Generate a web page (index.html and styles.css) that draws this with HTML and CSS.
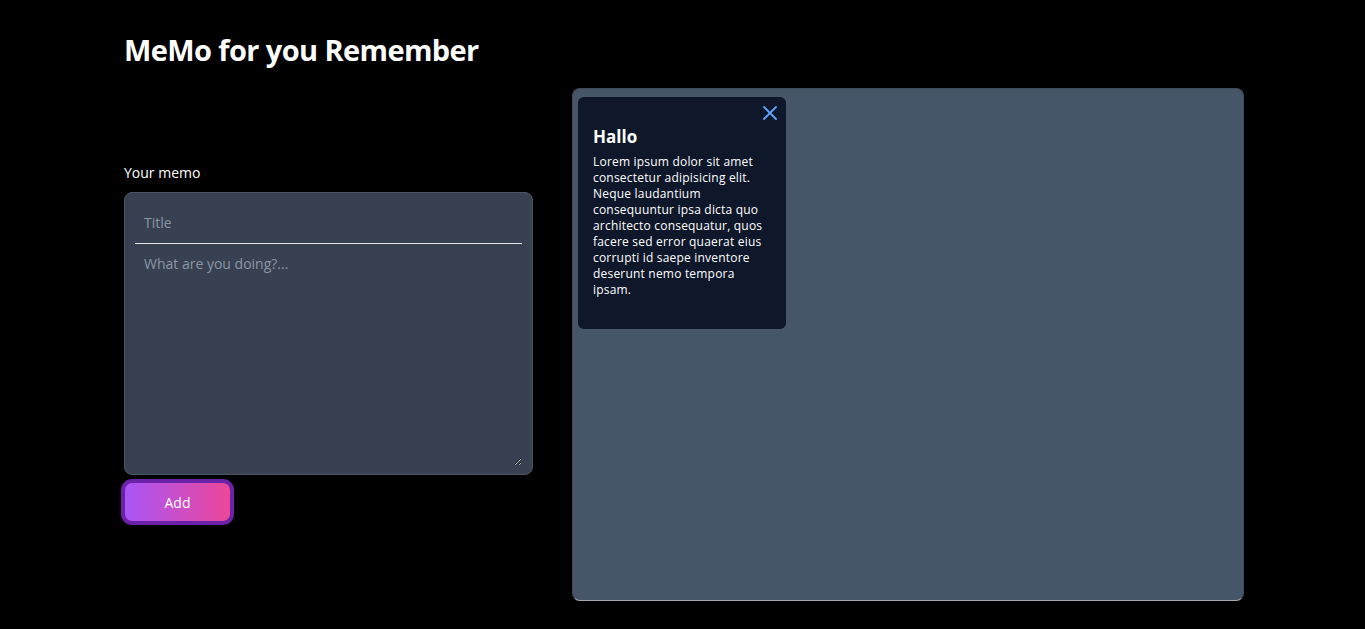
FILE: index.html
```html
<!DOCTYPE html>
<html lang="en">
<head>
<meta charset="utf-8">
<title>MeMo</title>
<link rel="stylesheet" href="styles.css">
</head>
<body>
<div class="page">
  <h1 class="title">MeMo for you Remember</h1>
  <div class="layout">
    <div class="form-col">
      <label class="label">Your memo</label>
      <div class="form-box">
        <input class="title-input" type="text" placeholder="Title">
        <textarea class="body-input" placeholder="What are you doing?..."></textarea>
      </div>
      <button class="add-btn">Add</button>
    </div>
    <div class="board">
      <div class="note">
        <button class="close" aria-label="close">
          <svg width="14" height="14" viewBox="0 0 14 14"><path d="M1 1L13 13M13 1L1 13" stroke="#60a5fa" stroke-width="1.8" stroke-linecap="round"/></svg>
        </button>
        <h2 class="note-title">Hallo</h2>
        <p class="note-text">Lorem ipsum dolor sit amet consectetur adipisicing elit. Neque laudantium consequuntur ipsa dicta quo architecto consequatur, quos facere sed error quaerat eius corrupti id saepe inventore deserunt nemo tempora ipsam.</p>
      </div>
    </div>
  </div>
</div>
</body>
</html>
```
FILE: styles.css
```css
* { box-sizing: border-box; }
html, body { margin: 0; padding: 0; background: #000; }
body { font-family: "Open Sans", "DejaVu Sans", sans-serif; color: #fff; }
.page { width: 1120px; margin: 0 0 0 124px; padding-top: 30px; }
.title { font-family: "Open Sans", sans-serif; font-weight: 700; font-size: 29px; margin: 0; line-height: 40px; letter-spacing: -0.6px; }
.layout { display: flex; gap: 39px; margin-top: 18px; align-items: flex-start; }
.form-col { width: 409px; display: flex; flex-direction: column; padding-top: 76px; }
.label { font-size: 14px; line-height: 18px; margin-bottom: 10px; }
.form-box { background: #374151; border: 1px solid #4b5563; border-radius: 8px; padding: 10px 10px 8px; display: flex; flex-direction: column; height: 283px; }
.title-input { background: transparent; border: none; border-bottom: 1px solid #e5e7eb; color: #fff; font: inherit; font-size: 14px; padding: 10px 9px 11px; outline: none; }
.body-input { flex: 1; background: transparent; border: none; color: #fff; font: inherit; font-size: 14px; padding: 10px 9px; outline: none; resize: vertical; }
.title-input::placeholder, .body-input::placeholder { color: #8b95a3; }
.add-btn { margin-top: 4px; margin-left: -3px; width: 113px; height: 46px; border: 4px solid #6b21a8; border-radius: 11px; background: linear-gradient(90deg, #a855f7, #ec4899); color: #fff; font: inherit; font-size: 14px; cursor: pointer; }
.board { width: 672px; height: 513px; background: #475569; border: 1px solid #3f4a5a; border-bottom-color: #a3a8b0; border-radius: 8px; padding: 8px 5px; display: flex; flex-wrap: wrap; align-content: flex-start; gap: 8px; }
.note { position: relative; width: 208px; background: #0f172a; border-radius: 6px; padding: 29px 15px 31px; }
.close { position: absolute; top: 9px; right: 9px; background: none; border: none; padding: 0; cursor: pointer; width: 14px; height: 14px; }
.close svg { display: block; }
.note-title { margin: 0 0 6px; font-size: 17px; font-weight: bold; line-height: 22px; }
.note-text { margin: 0; font-size: 12px; line-height: 16px; letter-spacing: 0.2px; }
```
